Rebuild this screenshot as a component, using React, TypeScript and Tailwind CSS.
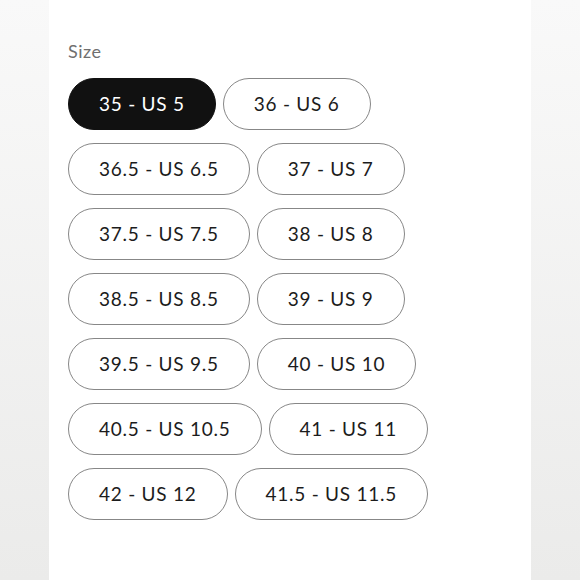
const sizes = [
  "35 - US 5",
  "36 - US 6",
  "36.5 - US 6.5",
  "37 - US 7",
  "37.5 - US 7.5",
  "38 - US 8",
  "38.5 - US 8.5",
  "39 - US 9",
  "39.5 - US 9.5",
  "40 - US 10",
  "40.5 - US 10.5",
  "41 - US 11",
  "42 - US 12",
  "41.5 - US 11.5",
];

export default function App() {
  const selected = "35 - US 5";

  return (
    <div className="flex h-[580px] w-[580px] font-['Lato',sans-serif]">
      {/* left shade */}
      <div className="w-[49px] bg-gradient-to-b from-[#f9f9f9] to-[#ebebea]" />

      <div className="flex-1 bg-white pl-[19px] pt-[40px]">
        <p className="text-[18px] leading-[22px] tracking-[0.5px] text-[#6f6f6f]">Size</p>

        <div className="mt-[16px] flex w-[420px] flex-wrap gap-x-[7px] gap-y-[13px]">
          {sizes.map((s) => {
            const active = s === selected;
            return (
              <button
                key={s}
                className={
                  active
                    ? "h-[52px] rounded-full border border-[#111] bg-[#111] px-[30px] text-[19px] tracking-[0.75px] text-white"
                    : "h-[52px] rounded-full border border-[#878787] bg-white px-[30px] text-[19px] tracking-[0.75px] text-[#1c1c1c]"
                }
              >
                {s}
              </button>
            );
          })}
        </div>
      </div>

      {/* right shade */}
      <div className="w-[49px] bg-gradient-to-b from-[#f9f9f9] to-[#ebebea]" />
    </div>
  );
}
